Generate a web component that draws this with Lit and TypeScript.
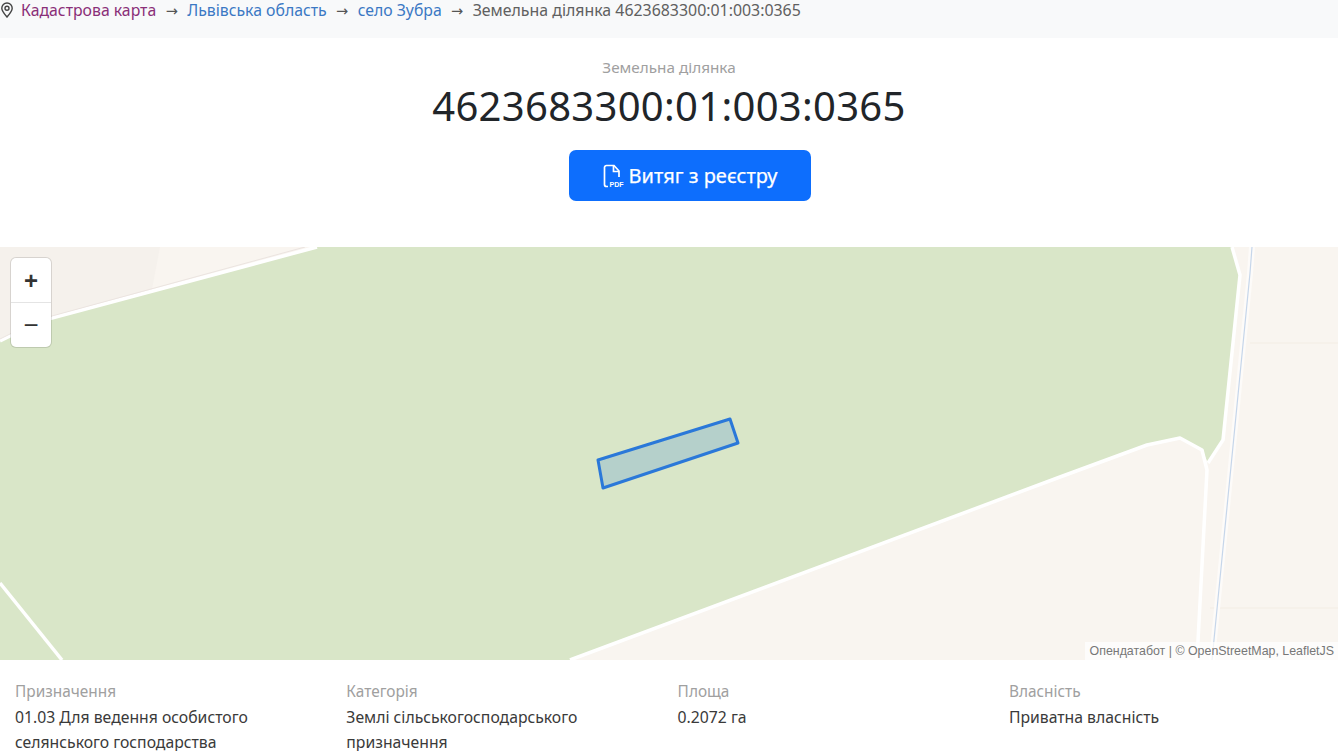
import { LitElement, html, css, svg } from "lit";
import { customElement } from "lit/decorators.js";

const cols = [
  { label: "Призначення", value: "01.03 Для ведення особистого селянського господарства" },
  { label: "Категорія", value: "Землі сільськогосподарського призначення" },
  { label: "Площа", value: "0.2072 га" },
  { label: "Власність", value: "Приватна власність" },
];

const mapArt = svg`
  <rect x="0" y="247" width="1338" height="413" fill="#f9f5f0"/>
  <path d="M0 247H160L150 300L0 341Z" fill="#f5f1ec"/>
  <path d="M0 341L52 318L317 247H1232L1240 275L1223 440L1208 463L1202 450L1182 439L1147 445L1060 477L570 660H0Z" fill="#d9e6c8"/>
  <path d="M1250 343H1338M1210 608H1338" stroke="#f5efe8" stroke-width="1.5" fill="none"/>
  <path d="M0 341L10 336L52 318L317 247" stroke="#fff" stroke-width="3.5" fill="none"/>
  <path d="M0 339L10 334L52 316L305 247" stroke="#ebe4e0" stroke-width="1" fill="none"/>
  <path d="M0 583L62 660" stroke="#fff" stroke-width="3.5" fill="none"/>
  <path d="M570 660L1060 477L1147 445L1180 438L1202 450L1207 470L1197 660" stroke="#fff" stroke-width="3.5" fill="none" stroke-linejoin="round"/>
  <path d="M1232 247L1240 275L1223 440L1208 463" stroke="#fff" stroke-width="3.5" fill="none" stroke-linejoin="round"/>
  <path d="M1252 247L1250 273L1212 660" stroke="#fdfbf9" stroke-width="6" fill="none"/>
  <path d="M1252 247L1250 273L1212 660" stroke="#c6d6ea" stroke-width="1.2" fill="none"/>
  <path d="M598 460L730 419L738 443L603 488Z" fill="#2a78d9" fill-opacity="0.2" stroke="#2a78d9" stroke-width="3" stroke-linejoin="round"/>
`;

@customElement("app-root")
export class AppRoot extends LitElement {
  static styles = css`
    :host {
      display: block;
      width: 1338px;
      height: 751px;
      overflow: hidden;
      background: #fff;
      font-family: "Noto Sans", "DejaVu Sans", sans-serif;
      font-size: 16px;
      color: #333;
    }
    .crumbs {
      display: flex;
      align-items: flex-start;
      height: 38px;
      box-sizing: border-box;
      background: #f8f9fa;
      font-size: 15.8px;
      line-height: 20px;
      white-space: nowrap;
    }
    .pin { width: 14px; height: 16px; margin: 2px 7px 0 0; flex: none; }
    .home { color: #8a2f78; }
    .link { color: #3b78c4; }
    .sep { color: #555; margin: 0 9.4px; font-size: 14.5px; }
    .cur { color: #606060; font-size: 15.9px; }
    .head {
      height: 209px;
      display: flex;
      flex-direction: column;
      align-items: center;
      box-sizing: border-box;
      padding-top: 19px;
    }
    .kind { color: #a0a0a0; line-height: 20px; font-size: 15.3px; }
    .title { font-size: 40px; line-height: 54px; color: #212529; margin: 2px 0 0; font-weight: 400; letter-spacing: 0.3px; }
    .btn {
      margin: 17px 0 0 42px;
      width: 242px;
      height: 51px;
      border-radius: 7px;
      background: #0d6efd;
      color: #fff;
      display: flex;
      align-items: center;
      justify-content: center;
      gap: 4px;
      font-size: 20px;
      -webkit-text-stroke: 0.25px #fff;
    }
    .btn svg { width: 22px; height: 24px; flex: none; }
    .pdf { font-size: 7px; font-weight: 700; fill: #fff; font-family: "Liberation Sans", sans-serif; }
    .map { position: relative; height: 413px; overflow: hidden; }
    .map > svg { display: block; width: 1338px; height: 413px; }
    .zoom {
      position: absolute;
      left: 11px;
      top: 11px;
      width: 40px;
      background: #fff;
      border-radius: 5px;
      box-shadow: 0 0 0 1px rgba(0, 0, 0, 0.12);
    }
    .zoom div {
      height: 44px;
      display: flex;
      align-items: center;
      justify-content: center;
      font: 400 26px "Liberation Sans", sans-serif;
      color: #333;
    }
    .zoom .plus { font-weight: 700; font-size: 24px; padding-top: 2px; box-sizing: border-box; }
    .zoom .minus { height: 45px; border-top: 1px solid #e4e4e4; box-sizing: border-box; }
    .attr {
      position: absolute;
      right: 0;
      bottom: 0;
      padding: 0 4px 0 5px;
      height: 18px;
      background: rgba(255, 255, 255, 0.7);
      color: #777;
      font: 12.4px/18px "Liberation Sans", sans-serif;
      white-space: nowrap;
    }
    .grid {
      display: grid;
      grid-template-columns: repeat(4, 331.3px);
      padding-top: 18px;
    }
    .col { padding: 0 15px; }
    .lbl { color: #a0a0a0; line-height: 26px; font-size: 15.4px; padding-top: 1px; }
    .val { color: #3a3a3a; font-size: 15.75px; line-height: 25px; }
  `;

  render() {
    return html`
      <nav class="crumbs">
        <svg class="pin" viewBox="0 0 14 16" fill="none" stroke="#444" stroke-width="1.4">
          <path d="M7 15C4 11.5 1.8 9 1.8 6.2a5.2 5.2 0 0 1 10.4 0C12.2 9 10 11.5 7 15Z"/>
          <circle cx="7" cy="6.2" r="2"/>
        </svg>
        <span class="home">Кадастрова карта</span><span class="sep">→</span>
        <span class="link">Львівська область</span><span class="sep">→</span>
        <span class="link">село Зубра</span><span class="sep">→</span>
        <span class="cur">Земельна ділянка 4623683300:01:003:0365</span>
      </nav>
      <header class="head">
        <div class="kind">Земельна ділянка</div>
        <h1 class="title">4623683300:01:003:0365</h1>
        <div class="btn">
          <svg viewBox="0 0 22 24" fill="none" stroke="#fff" stroke-width="1.7">
            <path d="M5 22.5H3.5A2 2 0 0 1 1.5 20.5V3.5A2 2 0 0 1 3.5 1.5H11L16 7V13"/>
            <path d="M10.5 1.5V7.5H16"/>
            <text class="pdf" x="6.5" y="22.5" stroke="none">PDF</text>
          </svg>
          <span>Витяг з реєстру</span>
        </div>
      </header>
      <section class="map">
        <svg viewBox="0 247 1338 413">${mapArt}</svg>
        <div class="zoom"><div class="plus">+</div><div class="minus">−</div></div>
        <div class="attr">Опендатабот | © OpenStreetMap, LeafletJS</div>
      </section>
      <section class="grid">
        ${cols.map(
          (c) => html`<div class="col"><div class="lbl">${c.label}</div><div class="val">${c.value}</div></div>`
        )}
      </section>
    `;
  }
}
